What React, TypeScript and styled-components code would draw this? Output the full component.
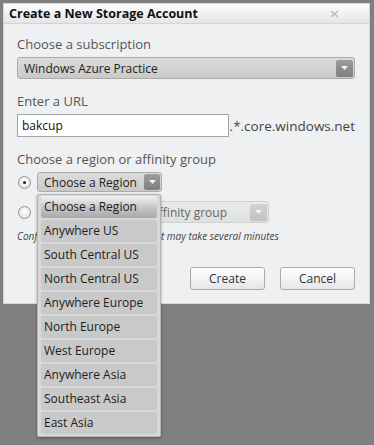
import styled, { createGlobalStyle } from "styled-components";

const GlobalStyle = createGlobalStyle`
  body {
    margin: 0;
    font-family: "Open Sans", "DejaVu Sans", sans-serif;
  }
`;

const Page = styled.div`
  background-color: #7f7f7f;
  height: 445px;
  padding: 3px 0 0 3px;
  box-sizing: border-box;
`;

const Dialog = styled.div`
  width: 367px;
  height: 301px;
  box-sizing: border-box;
  background-color: #eef0f1;
  border: 1px solid #d4d6d8;
`;

const TitleBar = styled.div`
  height: 19px;
  display: flex;
  align-items: center;
  justify-content: space-between;
  padding: 0 30px 0 5px;
  background: linear-gradient(#fdfdfd, #e4e5e6);
  border-bottom: 1px solid #d2d4d6;
`;

const Title = styled.span`
  font-size: 12.5px;
  font-weight: 700;
  color: #111;
`;

const Body = styled.div`
  padding: 11px 14px 0 13px;
  position: relative;
`;

const Label = styled.div<{ $top?: number }>`
  font-size: 13px;
  color: #555;
  line-height: 18px;
  margin-top: ${(p) => p.$top ?? 0}px;
  margin-bottom: 4px;
`;

const Select = styled.div<{ $width: number; $height: number; $faded?: boolean }>`
  width: ${(p) => p.$width}px;
  height: ${(p) => p.$height}px;
  box-sizing: border-box;
  display: flex;
  align-items: center;
  justify-content: space-between;
  padding: 0 1px 0 6px;
  border: 1px solid ${(p) => (p.$faded ? "#cfd0d1" : "#a9abad")};
  border-radius: 3px;
  background: ${(p) =>
    p.$faded ? "linear-gradient(#e9eaea, #dfe0e0)" : "linear-gradient(#dcdcdc, #c9c9c9)"};
  font-size: 12px;
  color: ${(p) => (p.$faded ? "#666" : "#222")};
  white-space: nowrap;
`;

const ArrowButton = styled.span<{ $size: number; $faded?: boolean }>`
  width: ${(p) => p.$size}px;
  height: ${(p) => p.$size}px;
  display: flex;
  align-items: center;
  justify-content: center;
  border-radius: 2px;
  background: ${(p) =>
    p.$faded ? "linear-gradient(#d2d2d2, #c2c2c2)" : "linear-gradient(#9c9c9c, #7f7f7f)"};
`;

const Arrow = () => (
  <svg width="7" height="4" viewBox="0 0 7 4">
    <path d="M0 0 H7 L3.5 4 Z" fill="#f4f4f4" />
  </svg>
);

const UrlRow = styled.div`
  display: flex;
  align-items: center;
`;

const TextInput = styled.div`
  width: 214px;
  height: 23px;
  box-sizing: border-box;
  border: 1px solid #a3a5a7;
  background-color: #fff;
  padding-left: 4px;
  font-size: 12px;
  line-height: 21px;
  color: #111;
`;

const Suffix = styled.span`
  font-size: 13.5px;
  color: #444;
  margin-left: 1px;
`;

const RadioRow = styled.div<{ $top: number }>`
  display: flex;
  align-items: center;
  gap: 6px;
  margin-top: ${(p) => p.$top}px;
  position: relative;
`;

const Radio = styled.span<{ $checked?: boolean }>`
  width: 13px;
  height: 13px;
  margin-left: 1px;
  box-sizing: border-box;
  border-radius: 50%;
  border: 1px solid #8d8f91;
  background: radial-gradient(circle at 50% 40%, #ffffff, #d9dadb);
  display: flex;
  align-items: center;
  justify-content: center;
  &::after {
    content: "";
    width: 3px;
    height: 3px;
    border-radius: 50%;
    background: ${(p) => (p.$checked ? "#222" : "transparent")};
  }
`;

const Note = styled.div`
  margin-top: 6px;
  font-size: 10px;
  font-style: italic;
  color: #444;
`;

const Buttons = styled.div`
  display: flex;
  justify-content: flex-end;
  gap: 15px;
  margin-top: 24px;
`;

const Button = styled.button`
  width: 75px;
  height: 23px;
  font-family: inherit;
  font-size: 12px;
  color: #333;
  border: 1px solid #a7a9ab;
  border-radius: 3px;
  background: linear-gradient(#ffffff, #e4e6e8);
  padding: 0;
`;

const DropList = styled.ul`
  position: absolute;
  top: 22px;
  left: 20px;
  width: 124px;
  margin: 0;
  padding: 1px 3px 2px 3px;
  box-sizing: border-box;
  list-style: none;
  background-color: #d8d8d8;
  border: 1px solid #b5b5b5;
  border-radius: 2px;
  box-shadow: 0 1px 3px rgba(0, 0, 0, 0.35);
  display: flex;
  flex-direction: column;
  gap: 2px;
  z-index: 2;
`;

const DropItem = styled.li<{ $active?: boolean }>`
  height: 22px;
  line-height: 22px;
  padding-left: 3px;
  border-radius: 2px;
  font-size: 12px;
  color: #1d1d1d;
  white-space: nowrap;
  background: ${(p) =>
    p.$active ? "linear-gradient(#f2f2f2, #c4c4c4 55%, #a9a9a9)" : "#c9c9c9"};
`;

const regions = [
  "Choose a Region",
  "Anywhere US",
  "South Central US",
  "North Central US",
  "Anywhere Europe",
  "North Europe",
  "West Europe",
  "Anywhere Asia",
  "Southeast Asia",
  "East Asia",
];

const CloseIcon = () => (
  <svg width="9" height="8" viewBox="0 0 9 8">
    <path d="M1 1 L8 7 M8 1 L1 7" stroke="#b9bbbd" strokeWidth="1.6" />
  </svg>
);

export default function App() {
  return (
    <>
      <GlobalStyle />
      <Page>
        <Dialog>
          <TitleBar>
            <Title>Create a New Storage Account</Title>
            <CloseIcon />
          </TitleBar>
          <Body>
            <Label>Choose a subscription</Label>
            <Select $width={338} $height={22}>
              Windows Azure Practice
              <ArrowButton $size={17}>
                <Arrow />
              </ArrowButton>
            </Select>
            <Label $top={13}>Enter a URL</Label>
            <UrlRow>
              <TextInput>bakcup</TextInput>
              <Suffix>.*.core.windows.net</Suffix>
            </UrlRow>
            <Label $top={13}>Choose a region or affinity group</Label>
            <RadioRow $top={2}>
              <Radio $checked />
              <Select $width={125} $height={20}>
                Choose a Region
                <ArrowButton $size={16}>
                  <Arrow />
                </ArrowButton>
              </Select>
              <DropList>
                {regions.map((r, i) => (
                  <DropItem key={r} $active={i === 0}>
                    {r}
                  </DropItem>
                ))}
              </DropList>
            </RadioRow>
            <RadioRow $top={9}>
              <Radio />
              <Select $width={232} $height={22} $faded>
                Choose an existing affinity group
                <ArrowButton $size={17} $faded>
                  <Arrow />
                </ArrowButton>
              </Select>
            </RadioRow>
            <Note>Configuring your storage account may take several minutes</Note>
            <Buttons>
              <Button>Create</Button>
              <Button>Cancel</Button>
            </Buttons>
          </Body>
        </Dialog>
      </Page>
    </>
  );
}
